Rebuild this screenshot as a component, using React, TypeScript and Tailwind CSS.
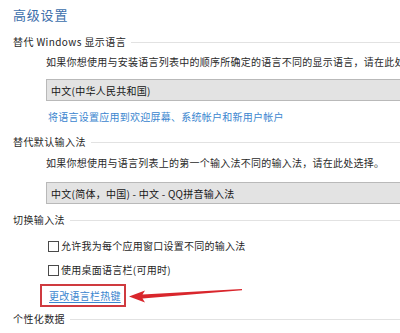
import React from 'react';

const font = { fontFamily: '"Noto Sans CJK SC", "Noto Sans", sans-serif' };

function GroupHeader({ label, className }: { label: string; className?: string }) {
  return (
    <div className={`flex items-center gap-[5px] h-[14px] ${className ?? ''}`}>
      <span className="text-[10px] leading-[14px] text-[#1f1f1f] whitespace-nowrap tracking-[0.4px]">{label}</span>
      <div className="flex-1 h-px bg-[#e2e2e2] -mr-[20px]" />
    </div>
  );
}

function Select({ value, className }: { value: string; className?: string }) {
  return (
    <div
      className={`ml-[33px] w-[380px] h-[22px] flex items-center pl-[4px] bg-[#e3e3e3] border border-[#b9b9b9] text-[10px] text-[#161616] whitespace-nowrap ${className ?? ''}`}
    >
      {value}
    </div>
  );
}

function Check({ label, className }: { label: string; className?: string }) {
  return (
    <div className={`ml-[35px] flex items-center gap-[2px] h-[14px] ${className ?? ''}`}>
      <span className="w-[11px] h-[11px] border border-[#4a4a4a] bg-white" />
      <span className="text-[10px] leading-[14px] text-[#1f1f1f] whitespace-nowrap">{label}</span>
    </div>
  );
}

export default function App() {
  return (
    <div
      className="w-[400px] h-[333px] overflow-hidden bg-white pl-[13px] pt-[7px] antialiased tracking-[0.25px]"
      style={font}
    >
      <div className="text-[13px] leading-[16px] text-[#3b6eab] tracking-[0.8px]">高级设置</div>

      <GroupHeader label="替代 Windows 显示语言" className="mt-[12px]" />
      <p className="mt-[6px] ml-[33px] text-[10px] leading-[14px] text-[#2a2a2a] whitespace-nowrap">
        如果你想使用与安装语言列表中的顺序所确定的语言不同的显示语言，请在此处
      </p>
      <Select value="中文(中华人民共和国)" className="mt-[10px]" />
      <a className="block mt-[9px] ml-[35px] text-[10px] leading-[14px] text-[#3b86cf] whitespace-nowrap">
        将语言设置应用到欢迎屏幕、系统帐户和新用户帐户
      </a>

      <GroupHeader label="替代默认输入法" className="mt-[11px]" />
      <p className="mt-[7px] ml-[33px] text-[10px] leading-[14px] text-[#2a2a2a] whitespace-nowrap">
        如果你想使用与语言列表上的第一个输入法不同的输入法，请在此处选择。
      </p>
      <Select value="中文(简体，中国) - 中文 - QQ拼音输入法" className="mt-[12px]" />

      <GroupHeader label="切换输入法" className="mt-[9px]" />
      <Check label="允许我为每个应用窗口设置不同的输入法" className="mt-[12px]" />
      <Check label="使用桌面语言栏(可用时)" className="mt-[10px]" />

      <div className="mt-[7px] ml-[27px] flex items-center">
        <div className="h-[23px] w-[86px] border-2 border-[#cf3a3f] flex items-center pl-[7px]">
          <a className="text-[10px] leading-[14px] text-[#3b86cf] underline underline-offset-2 whitespace-nowrap">
            更改语言栏热键
          </a>
        </div>
        <svg width="118" height="16" viewBox="0 0 118 16" className="ml-[1px]">
          <polygon
            points="2,8.5 18,2.5 15.5,6.5 115,1 115,2.2 15.5,10.5 18,14.5"
            fill="#d9262c"
          />
        </svg>
      </div>

      <GroupHeader label="个性化数据" className="mt-[5px]" />
    </div>
  );
}
